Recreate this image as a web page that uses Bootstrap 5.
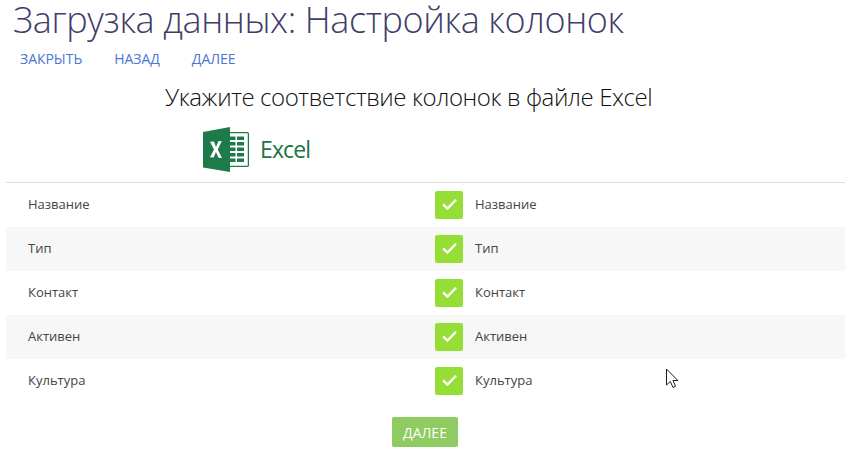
<!DOCTYPE html>
<html lang="ru">
<head>
<meta charset="utf-8">
<meta name="viewport" content="width=device-width, initial-scale=1">
<title>Загрузка данных: Настройка колонок</title>
<link rel="stylesheet" href="https://cdn.jsdelivr.net/npm/bootstrap@5.3.0/dist/css/bootstrap.min.css">
<style>
body{font-family:"Open Sans","Noto Sans",sans-serif;font-size:13px;color:#444;height:465px;overflow:hidden}
.page-title{font-size:36px;font-weight:300;line-height:40px;color:#403d68;padding-left:13px;height:40px;letter-spacing:-.37px}
.actions{height:38px;padding-left:20px;gap:32px}
.actions a{font-size:14px;line-height:38px;color:#4a76d4;letter-spacing:-.03px}
.subtitle{font-size:24px;font-weight:300;line-height:38px;color:#111;height:40px;padding-left:165px;letter-spacing:-.41px}
.brand-row{height:64px;padding:9px 0 0 195px}
.brand-name{font-size:23px;line-height:44px;color:#217346;letter-spacing:-.9px;padding-left:2px}
.mapping{margin-left:6px;border-top:1px solid #ddd}
.map-row{height:44px;padding-left:22px}
.map-row:nth-child(even){background:#f7f7f7}
.source{width:407px}
.tick{width:28px;height:28px;border-radius:2px;background:#95de35;margin-right:12px}
.btn-next{width:66px;height:30px;margin:14px 0 0 392px;border-radius:2px;background:#8ecb60;color:#fff;font-size:14px;line-height:32px}
.pointer{left:666px;top:368px}
</style>
</head>
<body class="bg-white position-relative">
<h1 class="page-title mb-0 text-nowrap"><span>Загрузка данных: Настройка колонок</span></h1>
<nav class="actions d-flex"><a class="text-decoration-none" href="#">ЗАКРЫТЬ</a><a class="text-decoration-none" href="#">НАЗАД</a><a class="text-decoration-none" href="#">ДАЛЕЕ</a></nav>
<h2 class="subtitle mb-0 text-nowrap"><span>Укажите соответствие колонок в файле Excel</span></h2>
<div class="brand-row d-flex">
<div class="d-flex ps-2">
<svg width="47" height="46" viewBox="0 0 47 46" aria-hidden="true">
<path d="M26 5.6H44.2Q45.4 5.6 45.4 6.8V38.2Q45.4 39.4 44.2 39.4H26" fill="#fff" stroke="#1e7a4b" stroke-width="1.3"/>
<path d="M27 9.500h5.500v3.500H27zM34 9.500h7v3.500h-7zM27 15h5.500v3.500H27zM34 15h7v3.500h-7zM27 20.500h5.500v3.500H27zM34 20.500h7v3.500h-7zM27 26h5.500v3.500H27zM34 26h7v3.500h-7zM27 31.500h5.500v3.500H27zM34 31.500h7v3.500h-7z" fill="#1e7a4b"/>
<path d="M0 5L27 0V45L0 40.500Z" fill="#1e7a4b"/>
<path d="M7 14.700L10.900 14.500L13 20L15.400 14.200L18.800 14L14.800 22.500L19 31.100L15.500 30.800L12.900 25L10.700 30.500L7 30.200L11 22.500Z" fill="#fff"/>
</svg>
</div>
<span class="brand-name ms-2">Excel</span>
</div>
<main class="mapping">
<div class="map-row d-flex align-items-center"><span class="source">Название</span><span class="tick d-flex"><svg width="28" height="28" viewBox="0 0 28 28"><path d="M8 13.300L12.500 17.600L21 8.800" fill="none" stroke="#fff" stroke-width="2.300"/></svg></span><span>Название</span></div>
<div class="map-row d-flex align-items-center"><span class="source">Тип</span><span class="tick d-flex"><svg width="28" height="28" viewBox="0 0 28 28"><path d="M8 13.300L12.500 17.600L21 8.800" fill="none" stroke="#fff" stroke-width="2.300"/></svg></span><span>Тип</span></div>
<div class="map-row d-flex align-items-center"><span class="source">Контакт</span><span class="tick d-flex"><svg width="28" height="28" viewBox="0 0 28 28"><path d="M8 13.300L12.500 17.600L21 8.800" fill="none" stroke="#fff" stroke-width="2.300"/></svg></span><span>Контакт</span></div>
<div class="map-row d-flex align-items-center"><span class="source">Активен</span><span class="tick d-flex"><svg width="28" height="28" viewBox="0 0 28 28"><path d="M8 13.300L12.500 17.600L21 8.800" fill="none" stroke="#fff" stroke-width="2.300"/></svg></span><span>Активен</span></div>
<div class="map-row d-flex align-items-center"><span class="source">Культура</span><span class="tick d-flex"><svg width="28" height="28" viewBox="0 0 28 28"><path d="M8 13.300L12.500 17.600L21 8.800" fill="none" stroke="#fff" stroke-width="2.300"/></svg></span><span>Культура</span></div>
</main>
<button type="button" class="btn btn-next d-block border-0 p-0">ДАЛЕЕ</button>
<svg class="pointer position-absolute" width="13" height="21" viewBox="0 0 13 21" aria-hidden="true"><path d="M.5 1V17L4.300 13.500L7 19.500L9.500 18.300L7 12.500H11.800Z" fill="#fff" stroke="#1c1c2c"/></svg>
<script src="https://cdn.jsdelivr.net/npm/bootstrap@5.3.0/dist/js/bootstrap.bundle.min.js"></script>
</body>
</html>
